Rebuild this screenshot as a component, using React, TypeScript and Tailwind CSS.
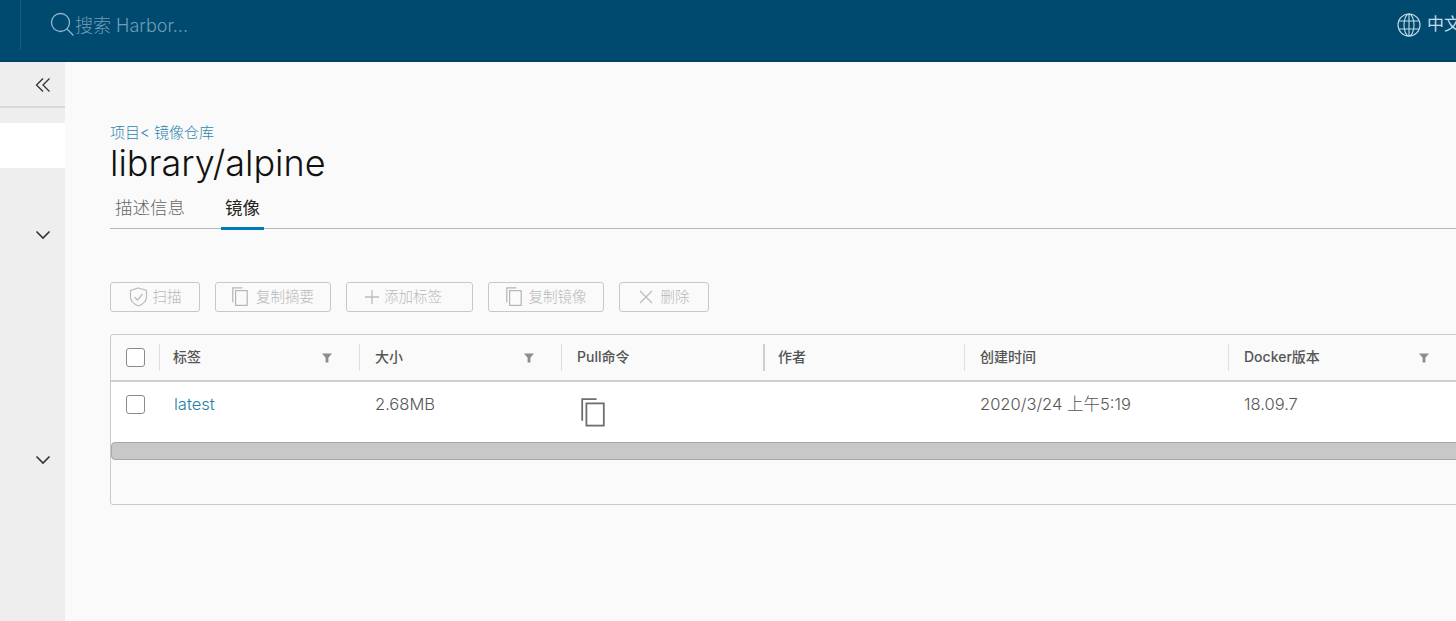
import React from "react";

const FONT = "[font-family:Inter,'Noto_Sans_CJK_SC',sans-serif]";

function Chevron() {
  return (
    <svg width="16" height="10" viewBox="0 0 16 10" fill="none" stroke="#333" strokeWidth="1.6" className="shrink-0">
      <path d="M1.5 1.5 L8 8 L14.5 1.5" />
    </svg>
  );
}

function CopyIcon({ size = 18, color = "#b5b5b5" }: { size?: number; color?: string }) {
  return (
    <svg width={size} height={size * 1.2} viewBox="0 0 20 24" fill="none" stroke={color} strokeWidth="1.5" className="shrink-0">
      <path d="M1 19 V1 H13" />
      <rect x="4.5" y="4.5" width="14.5" height="18.5" />
    </svg>
  );
}

function Filter() {
  return (
    <svg width="12" height="10" viewBox="0 0 12 10" fill="#8c8c8c">
      <path d="M1 0.5 H11 L7.4 4.8 V9.5 H4.6 V4.8 Z" />
    </svg>
  );
}

function Btn({ w, icon, label, gap }: { w: string; icon: React.ReactNode; label: string; gap: string }) {
  return (
    <div className={`${w} ${gap} h-[30px] flex items-center justify-center rounded-[3px] border border-[#c8c8c8] text-[14.5px] font-light text-[#b8b8b8] whitespace-nowrap`}>
      {icon}
      <span>{label}</span>
    </div>
  );
}

function Check() {
  return <div className="w-[19px] h-[19px] rounded-[3px] border border-[#8a8a8a] bg-white" />;
}

function HeadCell({ w, label, filter, first, strong }: { w: string; label: string; filter?: boolean; first?: boolean; strong?: boolean }) {
  return (
    <div className={`${w} h-full py-[9px] shrink-0`}>
      <div className={`h-full flex items-center justify-between pr-[26px] border-l ${first ? "pl-[13px]" : strong ? "pl-[13px]" : "pl-[15px]"} ${strong ? "border-[#cfcfcf] border-l-2" : "border-[#dedede]"}`}>
        <span className="text-[14px] font-medium text-[#555] whitespace-nowrap pb-[2px]">{label}</span>
        {filter && <Filter />}
      </div>
    </div>
  );
}

export default function App() {
  return (
    <div className={`${FONT} w-[1456px] h-[621px] overflow-hidden flex flex-col bg-[#fafafa]`}>
      <header className="h-[62px] shrink-0 bg-[#004a70] flex items-stretch border-b-2 border-b-[#004468]">
        <div className="w-[21px] h-[50px] border-r border-[#1a5c80]" />
        <div className="pl-[29px] flex items-center h-[50px] text-[#6f9db8] text-[18px] font-light">
          <svg width="25" height="26" viewBox="0 0 25 26" fill="none" stroke="#8fb8cf" strokeWidth="1.3">
            <circle cx="10.5" cy="10.5" r="9" />
            <path d="M17 17 L23.5 23.5" />
          </svg>
          <span className="whitespace-nowrap pt-[1px]">搜索 Harbor...</span>
        </div>
        <div className="ml-auto flex items-center h-[50px] gap-[6px] text-[#c4dbe8] text-[17px] w-[59px] overflow-hidden shrink-0">
          <svg width="24" height="24" viewBox="0 0 24 24" fill="none" stroke="#c4dbe8" strokeWidth="1.1" className="shrink-0">
            <circle cx="12" cy="12" r="11" />
            <ellipse cx="12" cy="12" rx="5" ry="11" />
            <path d="M12 1 V23 M1.8 8 H22.2 M1.8 16 H22.2" />
          </svg>
          <span className="whitespace-nowrap">中文</span>
        </div>
      </header>

      <div className="flex-1 flex min-h-0">
        <aside className="w-[65px] shrink-0 bg-[#eeeeee] flex flex-col">
          <div className="h-[46px] shrink-0 border-b-2 border-[#d8d8d8] flex items-center justify-end pr-[14px] pt-[2px]">
            <svg width="16" height="16" viewBox="0 0 16 16" fill="none" stroke="#333" strokeWidth="1.3">
              <path d="M8 1.5 L1.5 8 L8 14.5 M14.5 1.5 L8 8 L14.5 14.5" />
            </svg>
          </div>
          <div className="h-[45px] shrink-0 mt-[15px] bg-white" />
          <div className="flex-1 flex flex-col items-end pr-[14px] pt-[62px] gap-[215px]">
            <Chevron />
            <Chevron />
          </div>
        </aside>

        <main className="flex-1 min-w-0 pl-[45px] pt-[63px] overflow-hidden">
          <div className="text-[15px] leading-[16px] text-[#2f86ad] font-light h-[16px] whitespace-nowrap">项目&lt; 镜像仓库</div>
          <h1 className="text-[36px] leading-[42px] text-[#111] font-light mt-[1px]">library/alpine</h1>
          <div className="mt-[6px] h-[39px] border-b border-[#b8b8b8] flex items-stretch text-[17.5px]">
            <div className="ml-[5px] w-[70px] pt-[5px] text-[#666] font-light whitespace-nowrap">描述信息</div>
            <div className="ml-[36px] w-[43px] pt-[5px] text-center text-[#222] border-b-[3px] border-[#0079b8] h-[40px] whitespace-nowrap">镜像</div>
          </div>

          <div className="mt-[53px] flex gap-[15px]">
            <Btn w="w-[90px]" gap="gap-[5px]" label="扫描" icon={
              <svg width="19" height="20" viewBox="0 0 19 20" fill="none" stroke="#bcbcbc" strokeWidth="1.2">
                <path d="M9.5 1 L17.5 3.5 V10 C17.5 14.5 13 17.5 9.5 19 C6 17.5 1.5 14.5 1.5 10 V3.5 Z" />
                <path d="M5.5 10 L8.5 13 L13.5 7" />
              </svg>
            } />
            <Btn w="w-[116px]" gap="gap-[8px]" label="复制摘要" icon={<CopyIcon size={16} />} />
            <Btn w="w-[127px] pr-[13px]" gap="gap-[4px]" label="添加标签" icon={
              <svg width="16" height="16" viewBox="0 0 16 16" stroke="#bcbcbc" strokeWidth="1.3"><path d="M8 1 V15 M1 8 H15" /></svg>
            } />
            <Btn w="w-[116px]" gap="gap-[7px]" label="复制镜像" icon={<CopyIcon size={16} />} />
            <Btn w="w-[90px]" gap="gap-[8px]" label="删除" icon={
              <svg width="14" height="14" viewBox="0 0 14 14" stroke="#bcbcbc" strokeWidth="1.3"><path d="M1 1 L13 13 M13 1 L1 13" /></svg>
            } />
          </div>

          <div className="mt-[22px] w-[1400px] h-[171px] rounded-[3px] border border-[#c9c9c9] flex flex-col">
            <div className="h-[47px] shrink-0 flex border-b-2 border-[#cfcfcf]">
              <div className="w-[48px] shrink-0 flex items-center pl-[15px]"><Check /></div>
              <HeadCell w="w-[200px]" label="标签" filter first />
              <HeadCell w="w-[202px]" label="大小" filter />
              <HeadCell w="w-[202px]" label="Pull命令" />
              <HeadCell w="w-[201px]" label="作者" strong />
              <HeadCell w="w-[264px]" label="创建时间" />
              <HeadCell w="w-[228px]" label="Docker版本" filter />
            </div>
            <div className="h-[60px] shrink-0 bg-white flex text-[16.5px] font-light text-[#565656]">
              <div className="w-[48px] shrink-0 pl-[15px] pt-[13px]"><Check /></div>
              <div className="w-[200px] shrink-0 pl-[15px] pt-[10px] text-[#1f7ba8]">latest</div>
              <div className="w-[202px] shrink-0 pl-[16px] pt-[10px]">2.68MB</div>
              <div className="w-[202px] shrink-0 pl-[20px] pt-[16px]"><CopyIcon size={24} color="#6e6e6e" /></div>
              <div className="w-[201px] shrink-0" />
              <div className="w-[264px] shrink-0 pl-[16px] pt-[10px]">2020/3/24 上午5:19</div>
              <div className="w-[228px] shrink-0 pl-[16px] pt-[10px]">18.09.7</div>
            </div>
            <div className="h-[18px] shrink-0 rounded-[4px] bg-[#c8c8c8] border border-[#a8a8a8]" />
            <div className="flex-1" />
          </div>
        </main>
      </div>
    </div>
  );
}
